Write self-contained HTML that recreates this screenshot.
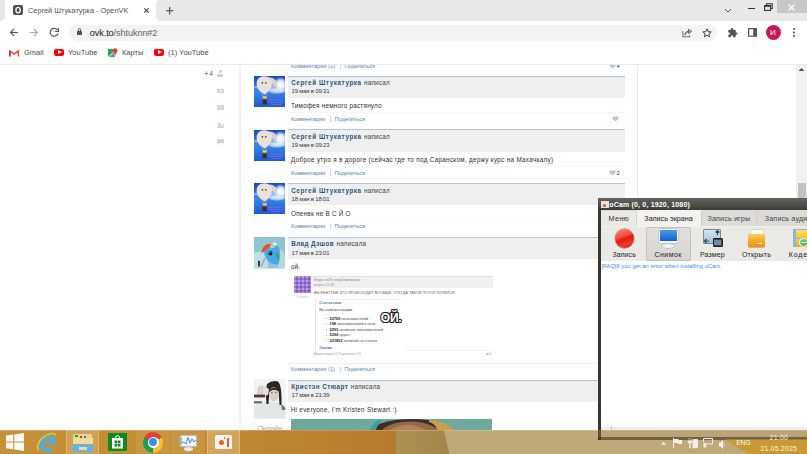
<!DOCTYPE html>
<html><head><meta charset="utf-8">
<style>
*{box-sizing:border-box;margin:0;padding:0}
html,body{width:807px;height:454px;overflow:hidden;background:#fff;font-family:"Liberation Sans",sans-serif;position:relative}
.a{position:absolute}
.t{position:absolute;white-space:nowrap;line-height:1.117}
svg{position:absolute;overflow:visible}
</style></head><body>
<div class="a" style="left:0;top:0;width:807px;height:454px;overflow:hidden">
<!-- CHROME TAB STRIP -->
<div class="a" style="left:0;top:0;width:162px;height:21px;background:#fff"></div>
<div class="a" style="left:0;top:0;width:5px;height:21px;background:#e8e8e8;border-radius:0 0 5px 0"></div>
<div class="a" style="left:156px;top:0;width:651px;height:21px;background:#e8e8e8;border-radius:4px 0 0 5px"></div>
<div class="a" style="left:12.6px;top:5.2px;width:10.2px;height:10.2px;background:#505050;border-radius:2px"></div>
<svg class="a" style="left:12.6px;top:5.2px" width="10.2" height="10.2"><ellipse cx="5.1" cy="5.1" rx="2.2" ry="2.7" stroke="#fff" stroke-width="1.3" fill="none"/></svg>
<div class="t" style="left:28px;top:6.8px;color:#505050;font-size:7.4px;letter-spacing:-0.02px">Сергей Штукатурка - OpenVK</div>
<svg class="a" style="left:143.8px;top:8.2px" width="5" height="5"><path d="M0.3 0.3 L4.7 4.7 M4.7 0.3 L0.3 4.7" stroke="#444" stroke-width="1.1"/></svg>
<svg class="a" style="left:166.4px;top:6.7px" width="7.4" height="7.4"><path d="M3.7 0 V7.4 M0 3.7 H7.4" stroke="#444" stroke-width="1.1"/></svg>
<!-- window controls -->
<div class="a" style="left:777px;top:0;width:30px;height:13px;background:#c7c7c7"></div>
<svg class="a" style="left:788px;top:3.5px" width="7" height="7"><path d="M0.5 0.5 L6.5 6.5 M6.5 0.5 L0.5 6.5" stroke="#fff" stroke-width="1.2"/></svg>
<div class="a" style="left:748px;top:8px;width:7px;height:1.2px;background:#333"></div>
<svg class="a" style="left:764px;top:3px" width="9" height="8"><path d="M2.5 2 V0.8 H8.2 V5.5 H7" stroke="#333" stroke-width="1.1" fill="none"/><rect x="0.6" y="2.6" width="6" height="4.8" stroke="#333" stroke-width="1.1" fill="none"/><rect x="0.6" y="2.6" width="6" height="1.2" fill="#333"/></svg>
<svg class="a" style="left:724px;top:8px" width="8" height="5"><path d="M1 1 L4 4 L7 1" stroke="#555" stroke-width="1" fill="none"/></svg>

<!-- TOOLBAR -->
<svg class="a" style="left:9px;top:28px" width="10" height="9"><path d="M9 4.5 H1.5 M5 1 L1.5 4.5 L5 8" stroke="#555" stroke-width="1.1" fill="none"/></svg>
<svg class="a" style="left:29px;top:28px" width="10" height="9"><path d="M1 4.5 H8.5 M5 1 L8.5 4.5 L5 8" stroke="#aaa" stroke-width="1.1" fill="none"/></svg>
<svg class="a" style="left:49px;top:27px" width="11" height="11"><path d="M8.6 3.2 A4 4 0 1 0 9 6.5" stroke="#555" stroke-width="1.2" fill="none"/><path d="M9.5 1 V4.5 H6" stroke="#555" stroke-width="1.1" fill="none"/></svg>
<div class="a" style="left:68.5px;top:24.5px;width:648.5px;height:16.7px;background:#f1f3f4;border-radius:8.35px"></div>
<div class="a" style="left:77px;top:30.5px;width:5px;height:4.5px;background:#555;border-radius:0.5px"></div>
<div class="a" style="left:78px;top:28px;width:3px;height:4px;border:1px solid #555;border-radius:2px 2px 0 0"></div>
<div class="t" style="left:89.8px;top:28.3px;color:#202124;font-size:9.2px;letter-spacing:-0.12px">ovk.to<span style="color:#5f6368">/shtuknn#2</span></div>
<!-- share/star -->
<svg class="a" style="left:0;top:0" width="807" height="45"><path d="M682.9 31 V36.8 H689.6 V35.2" stroke="#777" stroke-width="1.1" fill="none"/><path d="M684.9 35.2 Q685.2 31.5 689.6 31.4" stroke="#555" stroke-width="1.1" fill="none"/><path d="M688.6 29.2 L691.8 31.4 L688.6 33.6Z" stroke="#555" stroke-width=".9" fill="none" stroke-linejoin="round"/></svg>
<svg class="a" style="left:702px;top:28px" width="10" height="10"><path d="M5 0.8 L6.2 3.7 L9.2 3.9 L6.9 5.8 L7.6 8.8 L5 7.2 L2.4 8.8 L3.1 5.8 L0.8 3.9 L3.8 3.7 Z" stroke="#444" stroke-width="1" fill="none"/></svg>
<!-- extension puzzle -->
<svg class="a" style="left:728.2px;top:28px" width="9.6" height="9.6" viewBox="1.5 0.8 21.7 21.7"><path d="M20.5 11H19V7c0-1.1-.9-2-2-2h-4V3.5C13 2.12 11.88 1 10.5 1S8 2.12 8 3.5V5H4c-1.1 0-1.99.9-1.99 2v3.8H3.5c1.49 0 2.7 1.21 2.7 2.7s-1.21 2.7-2.7 2.7H2V20c0 1.1.9 2 2 2h3.8v-1.5c0-1.490 1.21-2.7 2.7-2.7 1.49 0 2.7 1.21 2.7 2.7V22H17c1.1 0 2-.9 2-2v-4h1.5c1.38 0 2.5-1.12 2.5-2.5S21.88 11 20.5 11z" fill="#555"/></svg>
<svg class="a" style="left:748.3px;top:28.2px" width="9" height="8.8"><rect x="0.6" y="0.6" width="7.8" height="7.6" stroke="#555" stroke-width="1.2" fill="none"/><rect x="5.2" y="0.6" width="3.2" height="7.6" fill="#555"/></svg>
<div class="a" style="left:766px;top:25px;width:15px;height:15px;border-radius:50%;background:#c8175a"></div>
<div class="t" style="left:770px;top:28.5px;color:#fff;font-size:8px">И</div>
<div class="a" style="left:792.5px;top:28px;width:2px;height:2px;background:#444;border-radius:1px;box-shadow:0 3.5px 0 #444,0 7px 0 #444"></div>

<!-- BOOKMARKS -->
<svg class="a" style="left:8.8px;top:49.7px" width="10.2" height="6.5"><path d="M0.8 6.5 V0.9 L5.1 4 L9.4 0.9 V6.5" stroke="#e0463a" stroke-width="1.5" fill="none"/><path d="M0.8 6.5 V2" stroke="#c5362a" stroke-width="1.5"/></svg>
<div class="t" style="left:24px;top:49px;color:#4a4a4a;font-size:7.5px">Gmail</div>
<div class="a" style="left:54px;top:48.5px;width:10px;height:7px;background:#f00;border-radius:2px"></div>
<svg class="a" style="left:57.5px;top:50px" width="4" height="4"><path d="M0 0 L4 2 L0 4Z" fill="#fff"/></svg>
<div class="t" style="left:68px;top:49px;color:#4a4a4a;font-size:7.5px">YouTube</div>
<svg class="a" style="left:107.8px;top:48px" width="10" height="9"><polygon points="0,1 5.3,1 5.3,3.9 0,8.9" fill="#1fa463"/><polygon points="0,8.9 5.3,3.9 6,5.2 1.5,8.9" fill="#f4d03f"/><polygon points="1.5,8.9 5.4,5.2 7.2,8.9" fill="#4285f4"/><circle cx="7.1" cy="2.6" r="2.4" fill="#ea4335"/><polygon points="4.9,3.6 9.3,3.6 7.1,7.4" fill="#ea4335"/><circle cx="7.1" cy="2.6" r=".8" fill="#b02a20"/></svg>

<div class="t" style="left:122px;top:49px;color:#4a4a4a;font-size:7.5px">Карты</div>
<div class="a" style="left:154px;top:48.5px;width:10px;height:7px;background:#f00;border-radius:2px"></div>
<svg class="a" style="left:157.5px;top:50px" width="4" height="4"><path d="M0 0 L4 2 L0 4Z" fill="#fff"/></svg>
<div class="t" style="left:168px;top:49px;color:#4a4a4a;font-size:7.5px">(1) YouTube</div>
<div class="a" style="left:0;top:64px;width:807px;height:1px;background:#e9e9e9"></div>


<div class="a" style="left:0;top:65px;width:807px;height:365px;overflow:hidden"><div class="a" style="left:0;top:-65px;width:807px;height:430px">
<div class="t" style="left:204.50px;top:69.72px;font-size:6.5px;color:#7d8e9e;font-weight:bold;letter-spacing:1.045px;">+4</div>
<div class="a" style="left:218.5px;top:70px;width:3px;height:3px;background:#c6ced6;border-radius:50%"></div>
<div class="a" style="left:217px;top:73.5px;width:6px;height:3.5px;background:#c6ced6;border-radius:2px 2px 0 0"></div>
<div class="a" style="left:217px;top:88.5px;width:6.5px;height:4.5px;background:#cdd4da;border-radius:1px"></div>
<div class="a" style="left:219px;top:89.5px;width:2.5px;height:2.5px;background:#eef1f4;border-radius:50%"></div>
<div class="a" style="left:217px;top:105px;width:6.5px;height:5px;background:#cdd4da;border-radius:0.5px"></div>
<svg style="left:217px;top:105px" width="7" height="5"><path d="M0.3 0.5 L3.25 3 L6.2 0.5 M0.3 4.6 L2.5 2.4 M6.2 4.6 L4 2.4" stroke="#eef1f4" stroke-width="0.7" fill="none"/></svg>
<div class="a" style="left:218px;top:123px;width:2.5px;height:2.5px;background:#cdd4da;border-radius:50%"></div>
<div class="a" style="left:217px;top:125.5px;width:4.5px;height:2.5px;background:#cdd4da;border-radius:1.5px 1.5px 0 0"></div>
<div class="a" style="left:221.5px;top:124px;width:2px;height:2px;background:#cdd4da;border-radius:50%"></div>
<div class="a" style="left:221px;top:126px;width:3px;height:2px;background:#cdd4da;border-radius:1px 1px 0 0"></div>
<div class="a" style="left:217px;top:138.5px;width:6.5px;height:4.5px;background:#cdd4da;border-radius:0.5px"></div>
<svg style="left:218px;top:142.5px" width="3" height="2"><path d="M0 0 L0 2 L2 0Z" fill="#cdd4da"/></svg>
<div class="a" style="left:239px;top:65px;width:2px;height:365px;background:#eef2f5;"></div>
<div class="a" style="left:233px;top:65px;width:1px;height:365px;background:#fafbfc;"></div>
<div class="a" style="left:637px;top:65px;width:1px;height:365px;background:#e4e8ee;"></div>
<div class="t" style="left:291.00px;top:62.83px;font-size:5.6px;color:#5b7fa6;letter-spacing:0.022px;">Комментарии (1)</div>
<div class="a" style="left:340px;top:63.10000000000001px;width:0.8px;height:5.5px;background:#c8d0d8;"></div>
<div class="t" style="left:344.50px;top:62.83px;font-size:5.6px;color:#5b7fa6;letter-spacing:-0.042px;">Поделиться</div>
<svg style="left:608.5px;top:62.6px" width="7" height="6"><path d="M3.5 5.6 L0.7 2.9 A1.6 1.6 0 0 1 3.5 1.0 A1.6 1.6 0 0 1 6.3 2.9 Z" fill="#b4c8de"/></svg>
<div class="t" style="left:616.40px;top:62.65px;font-size:5.8px;color:#333;">4</div>
<svg style="left:254px;top:76.0px" width="31" height="31" viewBox="0 0 31 31">
<defs><linearGradient id="sky76" x1="0" y1="0" x2="0" y2="1"><stop offset="0" stop-color="#1848c8"/><stop offset=".5" stop-color="#3a86e4"/><stop offset=".7" stop-color="#2f74de"/><stop offset="1" stop-color="#1a5ad4"/></linearGradient>
<filter id="bb76"><feGaussianBlur stdDeviation=".35"/></filter><radialGradient id="sun76"><stop offset="0" stop-color="#fff"/><stop offset=".5" stop-color="#fff" stop-opacity=".85"/><stop offset="1" stop-color="#fff" stop-opacity="0"/></radialGradient></defs>
<rect width="31" height="31" fill="url(#sky76)"/><g filter="url(#bb76)">
<circle cx="26.5" cy="8" r="7" fill="url(#sun76)"/>
<ellipse cx="23" cy="15" rx="8" ry="2.5" fill="#fff" opacity=".55"/>
<ellipse cx="4" cy="11" rx="4" ry="1.5" fill="#fff" opacity=".4"/>
<ellipse cx="24" cy="12" rx="9" ry="4" fill="#fff" opacity=".5"/>
<path d="M15 1.5 Q21.5 1.5 23 7 Q23.5 11.5 21.5 11.5 Q20 8 16 8Z" fill="#ddd2cf"/>
<path d="M10.3 0.3 Q17.8 0.3 17.9 8 Q17.8 14 10.5 18.6 Q2.6 14 2.6 8 Q2.7 0.3 10.3 0.3Z" fill="#eae0dc"/>
<circle cx="8.4" cy="6.8" r=".85" fill="#4a4040"/><circle cx="11.8" cy="6.8" r=".85" fill="#4a4040"/>
<path d="M8 17.5 L9 20.5 M12.5 17.5 L12 20.5" stroke="#ccc" stroke-width=".4"/>
<rect x="8.6" y="20.2" width="4.2" height="8" rx=".8" fill="#4a2a18"/>
<rect x="8.6" y="20.2" width="4.2" height="2.5" fill="#c8d8b0"/>
<rect x="8.6" y="23" width="4.2" height="1.2" fill="#a03020"/>
<path d="M14.5 24.2 H29 M14.5 26.5 H29 M17 28.6 H27" stroke="#a868f0" stroke-width=".8" opacity=".7"/>
</g></svg>
<div class="a" style="left:288px;top:75.5px;width:336.5px;height:22.5px;background:#efefef;border-top:1.5px solid #b3c5d8"></div>
<div class="t" style="left:291.20px;top:79.20px;font-size:6.3px;color:#2b5780;font-weight:bold;letter-spacing:0.585px;">Сергей Штукатурка</div>
<div class="t" style="left:364.00px;top:79.20px;font-size:6.3px;color:#404040;letter-spacing:0.237px;">написал</div>
<div class="t" style="left:291.50px;top:88.47px;font-size:6.0px;color:#3a3a3a;letter-spacing:-0.199px;">19 мая в 09:31</div>
<div class="t" style="left:291.00px;top:102.20px;font-size:6.3px;color:#2a2a2a;letter-spacing:0.249px;">Тимофея немного растянуло</div>
<div class="a" style="left:288px;top:112.0px;width:337px;height:1px;background:#f6f6f6;"></div>
<div class="t" style="left:291.00px;top:116.03px;font-size:5.6px;color:#5b7fa6;letter-spacing:-0.116px;">Комментарии</div>
<div class="a" style="left:330px;top:116.3px;width:0.8px;height:5.5px;background:#c8d0d8;"></div>
<div class="t" style="left:334.50px;top:116.03px;font-size:5.6px;color:#5b7fa6;letter-spacing:-0.042px;">Поделиться</div>
<svg style="left:611.5px;top:115.8px" width="7" height="6"><path d="M3.5 5.6 L0.7 2.9 A1.6 1.6 0 0 1 3.5 1.0 A1.6 1.6 0 0 1 6.3 2.9 Z" fill="#b4c8de"/></svg>
<svg style="left:254px;top:129.7px" width="31" height="31" viewBox="0 0 31 31">
<defs><linearGradient id="sky129" x1="0" y1="0" x2="0" y2="1"><stop offset="0" stop-color="#1848c8"/><stop offset=".5" stop-color="#3a86e4"/><stop offset=".7" stop-color="#2f74de"/><stop offset="1" stop-color="#1a5ad4"/></linearGradient>
<filter id="bb129"><feGaussianBlur stdDeviation=".35"/></filter><radialGradient id="sun129"><stop offset="0" stop-color="#fff"/><stop offset=".5" stop-color="#fff" stop-opacity=".85"/><stop offset="1" stop-color="#fff" stop-opacity="0"/></radialGradient></defs>
<rect width="31" height="31" fill="url(#sky129)"/><g filter="url(#bb129)">
<circle cx="26.5" cy="8" r="7" fill="url(#sun129)"/>
<ellipse cx="23" cy="15" rx="8" ry="2.5" fill="#fff" opacity=".55"/>
<ellipse cx="4" cy="11" rx="4" ry="1.5" fill="#fff" opacity=".4"/>
<ellipse cx="24" cy="12" rx="9" ry="4" fill="#fff" opacity=".5"/>
<path d="M15 1.5 Q21.5 1.5 23 7 Q23.5 11.5 21.5 11.5 Q20 8 16 8Z" fill="#ddd2cf"/>
<path d="M10.3 0.3 Q17.8 0.3 17.9 8 Q17.8 14 10.5 18.6 Q2.6 14 2.6 8 Q2.7 0.3 10.3 0.3Z" fill="#eae0dc"/>
<circle cx="8.4" cy="6.8" r=".85" fill="#4a4040"/><circle cx="11.8" cy="6.8" r=".85" fill="#4a4040"/>
<path d="M8 17.5 L9 20.5 M12.5 17.5 L12 20.5" stroke="#ccc" stroke-width=".4"/>
<rect x="8.6" y="20.2" width="4.2" height="8" rx=".8" fill="#4a2a18"/>
<rect x="8.6" y="20.2" width="4.2" height="2.5" fill="#c8d8b0"/>
<rect x="8.6" y="23" width="4.2" height="1.2" fill="#a03020"/>
<path d="M14.5 24.2 H29 M14.5 26.5 H29 M17 28.6 H27" stroke="#a868f0" stroke-width=".8" opacity=".7"/>
</g></svg>
<div class="a" style="left:288px;top:129.2px;width:336.5px;height:22.5px;background:#efefef;border-top:1.5px solid #b3c5d8"></div>
<div class="t" style="left:291.20px;top:132.90px;font-size:6.3px;color:#2b5780;font-weight:bold;letter-spacing:0.585px;">Сергей Штукатурка</div>
<div class="t" style="left:364.00px;top:132.90px;font-size:6.3px;color:#404040;letter-spacing:0.237px;">написал</div>
<div class="t" style="left:291.50px;top:142.17px;font-size:6.0px;color:#3a3a3a;letter-spacing:-0.199px;">19 мая в 09:23</div>
<div class="t" style="left:291.00px;top:155.90px;font-size:6.3px;color:#2a2a2a;letter-spacing:0.315px;">Доброе утро я в дороге (сейчас где то под Саранском, держу курс на Махачкалу)</div>
<div class="a" style="left:288px;top:165.7px;width:337px;height:1px;background:#f6f6f6;"></div>
<div class="t" style="left:291.00px;top:169.73px;font-size:5.6px;color:#5b7fa6;letter-spacing:-0.116px;">Комментарии</div>
<div class="a" style="left:330px;top:169.99999999999997px;width:0.8px;height:5.5px;background:#c8d0d8;"></div>
<div class="t" style="left:334.50px;top:169.73px;font-size:5.6px;color:#5b7fa6;letter-spacing:-0.042px;">Поделиться</div>
<svg style="left:608.5px;top:169.5px" width="7" height="6"><path d="M3.5 5.6 L0.7 2.9 A1.6 1.6 0 0 1 3.5 1.0 A1.6 1.6 0 0 1 6.3 2.9 Z" fill="#b4c8de"/></svg>
<div class="t" style="left:616.40px;top:169.55px;font-size:5.8px;color:#333;">2</div>
<svg style="left:254px;top:183.4px" width="31" height="31" viewBox="0 0 31 31">
<defs><linearGradient id="sky183" x1="0" y1="0" x2="0" y2="1"><stop offset="0" stop-color="#1848c8"/><stop offset=".5" stop-color="#3a86e4"/><stop offset=".7" stop-color="#2f74de"/><stop offset="1" stop-color="#1a5ad4"/></linearGradient>
<filter id="bb183"><feGaussianBlur stdDeviation=".35"/></filter><radialGradient id="sun183"><stop offset="0" stop-color="#fff"/><stop offset=".5" stop-color="#fff" stop-opacity=".85"/><stop offset="1" stop-color="#fff" stop-opacity="0"/></radialGradient></defs>
<rect width="31" height="31" fill="url(#sky183)"/><g filter="url(#bb183)">
<circle cx="26.5" cy="8" r="7" fill="url(#sun183)"/>
<ellipse cx="23" cy="15" rx="8" ry="2.5" fill="#fff" opacity=".55"/>
<ellipse cx="4" cy="11" rx="4" ry="1.5" fill="#fff" opacity=".4"/>
<ellipse cx="24" cy="12" rx="9" ry="4" fill="#fff" opacity=".5"/>
<path d="M15 1.5 Q21.5 1.5 23 7 Q23.5 11.5 21.5 11.5 Q20 8 16 8Z" fill="#ddd2cf"/>
<path d="M10.3 0.3 Q17.8 0.3 17.9 8 Q17.8 14 10.5 18.6 Q2.6 14 2.6 8 Q2.7 0.3 10.3 0.3Z" fill="#eae0dc"/>
<circle cx="8.4" cy="6.8" r=".85" fill="#4a4040"/><circle cx="11.8" cy="6.8" r=".85" fill="#4a4040"/>
<path d="M8 17.5 L9 20.5 M12.5 17.5 L12 20.5" stroke="#ccc" stroke-width=".4"/>
<rect x="8.6" y="20.2" width="4.2" height="8" rx=".8" fill="#4a2a18"/>
<rect x="8.6" y="20.2" width="4.2" height="2.5" fill="#c8d8b0"/>
<rect x="8.6" y="23" width="4.2" height="1.2" fill="#a03020"/>
<path d="M14.5 24.2 H29 M14.5 26.5 H29 M17 28.6 H27" stroke="#a868f0" stroke-width=".8" opacity=".7"/>
</g></svg>
<div class="a" style="left:288px;top:182.9px;width:336.5px;height:22.5px;background:#efefef;border-top:1.5px solid #b3c5d8"></div>
<div class="t" style="left:291.20px;top:186.60px;font-size:6.3px;color:#2b5780;font-weight:bold;letter-spacing:0.585px;">Сергей Штукатурка</div>
<div class="t" style="left:364.00px;top:186.60px;font-size:6.3px;color:#404040;letter-spacing:0.237px;">написал</div>
<div class="t" style="left:291.50px;top:195.87px;font-size:6.0px;color:#3a3a3a;letter-spacing:-0.199px;">18 мая в 18:01</div>
<div class="t" style="left:291.00px;top:209.60px;font-size:6.3px;color:#2a2a2a;letter-spacing:0.258px;">Опенвк не В С Й О</div>
<div class="a" style="left:288px;top:219.4px;width:337px;height:1px;background:#f6f6f6;"></div>
<div class="t" style="left:291.00px;top:223.43px;font-size:5.6px;color:#5b7fa6;letter-spacing:-0.116px;">Комментарии</div>
<div class="a" style="left:330px;top:223.7px;width:0.8px;height:5.5px;background:#c8d0d8;"></div>
<div class="t" style="left:334.50px;top:223.43px;font-size:5.6px;color:#5b7fa6;letter-spacing:-0.042px;">Поделиться</div>
<svg style="left:611.5px;top:223.2px" width="7" height="6"><path d="M3.5 5.6 L0.7 2.9 A1.6 1.6 0 0 1 3.5 1.0 A1.6 1.6 0 0 1 6.3 2.9 Z" fill="#b4c8de"/></svg>
<svg style="left:254px;top:236.6px" width="31" height="31.4" viewBox="0 0 31 31.4">
<defs><filter id="bl1"><feGaussianBlur stdDeviation=".55"/></filter></defs>
<rect width="31" height="31.4" fill="#90c6d2"/>
<g filter="url(#bl1)">
<path d="M0 16 Q8 12 14 18 L14 31.4 H0Z" fill="#bddfe6"/>
<path d="M25 12 Q31 14 31 20 V31.4 H24Z" fill="#b2d9e2"/>
<path d="M10 10 Q17 6.5 24 9 Q26.5 12 25.8 20 Q25.5 26 24 27.3 Q18 28 15 25 Q12 22 10.5 18 Z" fill="#4aa6e8"/>
<path d="M21.5 15 Q25 16 25 21 L24 23 Q22 20 21.5 15Z" fill="#36a458"/>
<path d="M7.5 16.4 Q8 9 13 7.2 Q17 6.5 18 8 Q14 10 12 13 Z" fill="#f04a26"/>
<path d="M16.4 7.7 Q20 7.5 20.8 11 Q18.5 10 16.4 12Z" fill="#f8c850"/>
<path d="M18.6 5.5 Q22.5 5 23 8.4 L19.5 8.6Z" fill="#eef6f8"/>
<ellipse cx="16.4" cy="16.4" rx="2" ry="2.1" fill="#1e1830"/>
<circle cx="15.8" cy="15.8" r=".55" fill="#fff"/>
<path d="M11 21 L7.2 29.5" stroke="#a4acb2" stroke-width="1.7"/>
<rect x="4" y="23.8" width="2" height="5.7" fill="#3a3a3a"/>
</g>
</svg>
<div class="a" style="left:288px;top:236.6px;width:336.5px;height:22.5px;background:#efefef;border-top:1.5px solid #b3c5d8"></div>
<div class="t" style="left:291.20px;top:240.30px;font-size:6.3px;color:#2b5780;font-weight:bold;letter-spacing:0.416px;">Влад Дэшов</div>
<div class="t" style="left:336.40px;top:240.30px;font-size:6.3px;color:#404040;letter-spacing:0.282px;">написала</div>
<div class="t" style="left:291.50px;top:249.57px;font-size:6.0px;color:#3a3a3a;letter-spacing:-0.199px;">17 мая в 23:01</div>
<div class="t" style="left:291.00px;top:263.30px;font-size:6.3px;color:#2a2a2a;letter-spacing:0.242px;">ой.</div>
<div class="a" style="left:405px;top:350.3px;width:88px;height:0.8px;background:#f2f2f2;"></div>
<svg style="left:294px;top:276px" width="17" height="17"><defs><pattern id="pp" width="4" height="4" patternUnits="userSpaceOnUse"><rect width="4" height="4" fill="#9a7ad0"/><circle cx="1" cy="1" r="1" fill="#d0a8f0"/><circle cx="3" cy="3" r=".9" fill="#6a50b0"/></pattern></defs><rect width="17" height="17" fill="url(#pp)"/></svg>
<div class="a" style="left:311px;top:276.3px;width:182px;height:12px;background:#f0f0f0;border-top:1px solid #d8e0e8"></div>
<div class="t" style="left:313.80px;top:277.94px;font-size:3.6px;color:#6a7f9a;letter-spacing:0.189px;">Федя ебЛя опубликовала</div>
<div class="t" style="left:314.00px;top:283.59px;font-size:3.0px;color:#888;letter-spacing:0.093px;">вчера в 21:03</div>
<div class="t" style="left:313.80px;top:292.33px;font-size:3.5px;color:#555;letter-spacing:0.135px;">ВЫ ЕБНУТЫЕ ЧТО ПРОИСХОДИТ ВООБЩЕ, ОТКУДА ТАКОЙ ПОТОК ПОПИЛСЯ</div>
<div class="t" style="left:296.00px;top:296.29px;font-size:3.0px;color:#bbb;letter-spacing:0.343px;">Онлайн</div>
<div class="a" style="left:315.4px;top:299.3px;width:90px;height:58px;background:#fff;border-left:1px solid #e6e6e6;border-top:1px solid #f2f2f2"></div>
<div class="t" style="left:319.30px;top:300.84px;font-size:3.6px;color:#4a6a8a;font-weight:bold;letter-spacing:0.208px;">Статистика</div>
<div class="t" style="left:319.30px;top:308.05px;font-size:3.7px;color:#333;letter-spacing:0.019px;">На этой инстанции:</div>
<div class="a" style="left:326.2px;top:318.0px;width:1.2px;height:1.2px;background:#888;border-radius:50%"></div>
<div class="t" style="left:329.6px;top:316.56px;font-size:3.8px;color:#444;letter-spacing:0.044px"><b style="color:#111">22765</b> пользователей</div>
<div class="a" style="left:326.2px;top:323.5px;width:1.2px;height:1.2px;background:#888;border-radius:50%"></div>
<div class="t" style="left:329.6px;top:322.06px;font-size:3.8px;color:#444;letter-spacing:0.003px"><b style="color:#111">198</b> пользователей в сети</div>
<div class="a" style="left:326.2px;top:329.0px;width:1.2px;height:1.2px;background:#888;border-radius:50%"></div>
<div class="t" style="left:329.6px;top:327.56px;font-size:3.8px;color:#444;letter-spacing:0.010px"><b style="color:#111">2293</b> активных пользователей</div>
<div class="a" style="left:326.2px;top:334.5px;width:1.2px;height:1.2px;background:#888;border-radius:50%"></div>
<div class="t" style="left:329.6px;top:333.06px;font-size:3.8px;color:#444;letter-spacing:0.102px"><b style="color:#111">5396</b> групп</div>
<div class="a" style="left:326.2px;top:340.0px;width:1.2px;height:1.2px;background:#888;border-radius:50%"></div>
<div class="t" style="left:329.6px;top:338.56px;font-size:3.8px;color:#444;letter-spacing:0.064px"><b style="color:#111">221893</b> записей на стенах</div>
<div class="t" style="left:319.30px;top:346.24px;font-size:3.6px;color:#5a7a9a;font-weight:bold;letter-spacing:-0.238px;">Ссылки</div>
<div class="t" style="left:380.80px;top:312.34px;font-size:12px;color:#fff;font-weight:bold;letter-spacing:-0.231px;text-shadow:-1px 0 0 #222,1px 0 0 #222,0 -1px 0 #222,0 1px 0 #222,-.8px -.8px 0 #222,.8px .8px 0 #222,-.8px .8px 0 #222,.8px -.8px 0 #222;">ОЙ.</div>
<div class="t" style="left:313.40px;top:352.79px;font-size:3.0px;color:#8aa0b8;letter-spacing:0.082px;">Комментарии (2)   Поделиться (3)</div>
<div class="a" style="left:485.5px;top:352.8px;width:3px;height:2.6px;background:#b8c8dc;border-radius:50% 50% 50% 50%/60% 60% 40% 40%"></div>
<div class="t" style="left:489.50px;top:352.79px;font-size:3.0px;color:#8a9aa8;">6</div>
<div class="a" style="left:288px;top:362.5px;width:337px;height:1px;background:#f0f0f0;"></div>
<div class="t" style="left:291.00px;top:366.23px;font-size:5.6px;color:#5b7fa6;letter-spacing:0.022px;">Комментарии (1)</div>
<div class="a" style="left:340px;top:366.5px;width:0.8px;height:5.5px;background:#c8d0d8;"></div>
<div class="t" style="left:344.50px;top:366.23px;font-size:5.6px;color:#5b7fa6;letter-spacing:-0.042px;">Поделиться</div>
<svg style="left:254px;top:379.4px" width="31.5" height="39.4" viewBox="0 0 31.5 39.4">
<defs><filter id="bl2"><feGaussianBlur stdDeviation=".5"/></filter></defs>
<rect width="31.5" height="39.4" fill="#f2f2f2"/>
<g filter="url(#bl2)">
<path d="M0 39.4 L0 27 Q8 22 18 23 Q27 23 31.5 28 L31.5 39.4Z" fill="#e2e6e6"/>
<path d="M12.5 25 Q11 12 13 5 Q18 1 24 2.5 Q28 6 27.5 26 L25.5 26 L24.5 12 Q20 9 15.5 12 L14.5 25Z" fill="#2e2828"/>
<ellipse cx="19.8" cy="15.2" rx="4.8" ry="7" fill="#d9cdc7"/>
<path d="M15 11.5 Q19 6.5 25 10.5 L24.8 12.5 Q20 9 15.3 13Z" fill="#2e2828"/>
<path d="M17 13.6 H18.8 M21 13.6 H22.8" stroke="#555" stroke-width=".7"/>
<path d="M2.5 16 Q2.5 9 6 6.5 Q11 6 15 10.5 L14 16 Q9 17.5 2.5 16Z" fill="#e6dedb"/>
<path d="M5 7 V15 M8 6.5 V15" stroke="#9a8a86" stroke-width=".5"/>
<rect x="0" y="15.6" width="11" height="2.8" fill="#5e3028"/>
<rect x="0" y="22.3" width="7.8" height="2" fill="#52605e"/>
<path d="M27 25.5 Q31.5 27 31.5 31 L28 31Z" fill="#6e7676"/>
</g>
</svg>
<div class="t" style="left:257.30px;top:424.68px;font-size:7.2px;color:#a4a8ac;letter-spacing:-0.180px;">Онлайн</div>
<div class="a" style="left:288px;top:379.5px;width:336.5px;height:22.5px;background:#efefef;border-top:1.5px solid #b3c5d8"></div>
<div class="t" style="left:291.20px;top:383.20px;font-size:6.3px;color:#2b5780;font-weight:bold;letter-spacing:0.474px;">Кристэн Стюарт</div>
<div class="t" style="left:350.70px;top:383.20px;font-size:6.3px;color:#404040;letter-spacing:0.232px;">написала</div>
<div class="t" style="left:291.50px;top:392.47px;font-size:6.0px;color:#3a3a3a;letter-spacing:-0.199px;">17 мая в 21:39</div>
<div class="t" style="left:290.70px;top:406.20px;font-size:6.3px;color:#2a2a2a;letter-spacing:0.312px;">Hi everyone, I'm Kristen Stewart :)</div>
<svg style="left:291px;top:419.2px" width="201" height="11" viewBox="0 0 201 11">
<defs><filter id="bl3"><feGaussianBlur stdDeviation=".7"/></filter></defs>
<rect width="201" height="11" fill="#6fa99b"/>
<g filter="url(#bl3)">
<ellipse cx="121" cy="14" rx="42" ry="14" fill="#3a2e26"/>
<path d="M79 11 Q82 4 88 1 L91 2 Q86 6 85 11Z" fill="#3f98ac"/>
<path d="M138 1 Q156 2 163 11 L146 11 Q145 5 138 3Z" fill="#c9a04a"/>
<ellipse cx="119" cy="16" rx="30" ry="13.5" fill="#94694a"/>
<ellipse cx="117" cy="17.5" rx="21" ry="11.5" fill="#b08260"/>
</g>
</svg>
</div></div>
<div class="a" style="left:796px;top:65px;width:11px;height:365px;background:#f1f1f1"></div>
<svg style="left:798px;top:67px" width="7" height="5"><path d="M0.5 4 L3.5 1 L6.5 4Z" fill="#505050"/></svg>
<div class="a" style="left:797.5px;top:183px;width:8px;height:20px;background:#c1c1c1"></div>
<div class="a" style="left:597.6px;top:198px;width:209.4px;height:241.5px;background:#37362f;"></div>
<div class="a" style="left:597.6px;top:198px;width:209.4px;height:11.6px;background:linear-gradient(180deg,#62635d 0,#575852 30%,#4a4b45 65%,#3a3a35 100%);"></div>
<div class="a" style="left:601px;top:210px;width:206px;height:16px;background:#dcdad6;"></div>
<div class="a" style="left:601px;top:226px;width:206px;height:35px;background:#ebe9e5;"></div>
<div class="a" style="left:601px;top:261px;width:206px;height:166px;background:#fff;"></div>
<div class="a" style="left:601px;top:426.5px;width:206px;height:3.5px;background:#efedef;"></div>
<div class="a" style="left:601px;top:201px;width:8px;height:7px;background:#e8e2d8;"></div>
<div class="a" style="left:603px;top:203.5px;width:3px;height:3px;background:#e05020;border-radius:50%"></div>
<div class="t" style="left:609.20px;top:201.26px;font-size:7.0px;color:#fff;font-weight:bold;letter-spacing:0.180px;">oCam (0, 0, 1920, 1080)</div>
<div class="a" style="left:601px;top:211px;width:36.4px;height:15px;background:#ebe9e5;border-right:1px solid #d6d4d0"></div>
<div class="t" style="left:608.60px;top:214.68px;font-size:7.2px;color:#333;letter-spacing:0.235px;">Меню</div>
<div class="a" style="left:637px;top:210px;width:64px;height:16px;background:#f3f2ef;"></div>
<div class="t" style="left:644.30px;top:214.68px;font-size:7.2px;color:#222;letter-spacing:0.012px;">Запись экрана</div>
<div class="a" style="left:701px;top:211px;width:56px;height:15px;background:#dedcd8;border-right:1px solid #cfcdc9;border-left:1px solid #cfcdc9"></div>
<div class="t" style="left:707.50px;top:214.68px;font-size:7.2px;color:#444;letter-spacing:0.122px;">Запись игры</div>
<div class="t" style="left:764.70px;top:214.68px;font-size:7.2px;color:#444;letter-spacing:0.155px;">Запись аудио</div>
<div class="a" style="left:601px;top:226px;width:206px;height:1px;background:#f3f2ef;"></div>
<div class="a" style="left:614.8px;top:228.8px;width:19px;height:19px;border-radius:50%;background:linear-gradient(160deg,#ff8a78 0,#f44a3a 40%,#e01a10 52%,#f03a28 75%,#c80c08 100%);box-shadow:0 0 0 .4px #c05050"></div>
<div class="t" style="left:612.40px;top:250.66px;font-size:7.0px;color:#222;letter-spacing:0.089px;">Запись</div>
<div class="a" style="left:646px;top:227px;width:45px;height:34px;background:linear-gradient(180deg,#e2e0dc,#d8d6d2);border:1px solid #c4c2be;border-radius:2px"></div>
<div class="a" style="left:658.5px;top:228.8px;width:19.5px;height:14px;background:#f4f6f8;border-radius:1.5px;box-shadow:0 0 0 .5px #b0b4b8"></div>
<div class="a" style="left:660px;top:230px;width:16.5px;height:11.3px;background:linear-gradient(180deg,#4a9ae8,#1a5ed0);"></div>
<div class="a" style="left:665.5px;top:242.6px;width:5.5px;height:2.2px;background:#e0e2e4;"></div>
<div class="a" style="left:661.5px;top:244.2px;width:12.5px;height:3.6px;background:#eef0f2;border-radius:50%;box-shadow:0 0 0 .5px #a8acb0"></div>
<div class="t" style="left:654.50px;top:250.66px;font-size:7.0px;color:#222;letter-spacing:0.450px;">Снимок</div>
<div class="a" style="left:703.2px;top:229.4px;width:17.6px;height:15px;background:linear-gradient(180deg,#d8e4ee,#a8bccc);border:1px solid #7a8a9a;border-radius:1px"></div>
<svg style="left:703px;top:229px" width="20" height="19"><path d="M14.5 1.5 V6 M12.5 3.5 L14.5 1.5 L16.5 3.5" stroke="#2a4a6a" stroke-width="1.2" fill="none"/><path d="M1.5 12 H6 M3.5 10 L1.5 12 L3.5 14" stroke="#2a4a6a" stroke-width="1.2" fill="none"/></svg>
<div class="a" style="left:712.9px;top:238.2px;width:9.7px;height:8.8px;background:#3a4650;border:1px solid #1a2228;border-radius:1px"></div>
<div class="a" style="left:714.4px;top:239.7px;width:6.7px;height:5px;background:#6a8aa8;"></div>
<div class="t" style="left:699.90px;top:250.66px;font-size:7.0px;color:#222;letter-spacing:0.157px;">Размер</div>
<div class="a" style="left:749.5px;top:229.4px;width:14.5px;height:6px;background:#fbfaf6;border:0.5px solid #d8d4c8;border-radius:1px"></div>
<div class="a" style="left:748.1px;top:233.5px;width:17.3px;height:13.5px;background:linear-gradient(180deg,#ffcc55,#f6a42a 60%,#ec9018);border-radius:1.5px;box-shadow:0 0.5px 0 #c87810"></div>
<div class="a" style="left:757px;top:242.6px;width:5px;height:1px;background:#fff6e0;"></div>
<div class="t" style="left:741.90px;top:250.66px;font-size:7.0px;color:#222;letter-spacing:0.244px;">Открыть</div>
<div class="a" style="left:793.1px;top:228.8px;width:14px;height:18.7px;background:#8ab8d8;"></div>
<div class="a" style="left:795.5px;top:229.8px;width:11.5px;height:7.8px;background:linear-gradient(180deg,#ffe070,#f8c030);"></div>
<div class="a" style="left:795.5px;top:238.6px;width:11.5px;height:8px;background:linear-gradient(180deg,#f8d050,#e8a818);"></div>
<div class="a" style="left:799px;top:238px;width:9px;height:9px;border-radius:50%;background:radial-gradient(circle at 40% 35%,#70d870,#20a030);border:1px solid #fff"></div>
<div class="a" style="left:800.5px;top:242px;width:6px;height:1.2px;background:#fff;"></div>
<div class="t" style="left:788.80px;top:250.66px;font-size:7.0px;color:#222;letter-spacing:0.829px;">Кодек</div>
<div class="t" style="left:601.40px;top:263.05px;font-size:5.8px;color:#3f86d6;letter-spacing:0.037px;">[FAQ]If you get an error when installing oCam</div>
<div class="a" style="left:611px;top:426px;width:0.8px;height:10px;background:#c8c8c8;"></div>
<svg style="left:0;top:430px" width="807" height="24" viewBox="0 430 807 24"><defs>
<linearGradient id="tbo" x1="0" y1="0" x2="1" y2="0"><stop offset="0" stop-color="#c6903a"/><stop offset=".55" stop-color="#c08a32"/><stop offset="1" stop-color="#b7792e"/></linearGradient>
<linearGradient id="tbm" x1="0" y1="0" x2="1" y2="0"><stop offset="0" stop-color="#ad9152"/><stop offset="1" stop-color="#a2854a"/></linearGradient></defs>
<rect x="0" y="430" width="397" height="24" fill="url(#tbo)"/>
<rect x="396" y="430" width="411" height="24" fill="#bfa97b"/>
<polygon points="396,430 443.8,430 449.4,454 396,454" fill="url(#tbm)"/>
</svg>
<div class="a" style="left:0px;top:430px;width:807px;height:1px;background:rgba(255,230,170,.25);"></div>
<div class="a" style="left:601px;top:430px;width:206px;height:7.5px;background:rgba(60,50,30,.03);"></div>
<div class="a" style="left:597.8px;top:430px;width:3px;height:9.6px;background:rgba(30,25,15,.6);"></div>
<div class="a" style="left:597.8px;top:437.4px;width:209.2px;height:2.2px;background:rgba(50,40,20,.55);"></div>
<svg style="left:0;top:0" width="807" height="454"><polygon points="725,439.6 807,439.6 807,454 748,454" fill="#c89a34"/></svg>
<div class="a" style="left:66px;top:430px;width:33px;height:24px;background:rgba(255,235,190,.22);border-left:1px solid rgba(255,250,230,.2);border-right:1px solid rgba(255,250,230,.2)"></div>
<div class="a" style="left:136px;top:430px;width:34px;height:24px;background:rgba(255,235,190,.10);"></div>
<div class="a" style="left:171px;top:430px;width:34px;height:24px;background:rgba(255,235,190,.10);"></div>
<div class="a" style="left:207px;top:430px;width:33px;height:24px;background:rgba(255,240,200,.28);border-left:1px solid rgba(255,250,230,.25);border-right:1px solid rgba(255,250,230,.25)"></div>
<svg style="left:6px;top:433px" width="18" height="18"><path d="M0 2.6 L7.3 1.6 V8.4 H0Z M8.3 1.4 L18 0 V8.4 H8.3Z M0 9.4 H7.3 V16.3 L0 15.3Z M8.3 9.4 H18 V17.9 L8.3 16.5Z" fill="#fff" opacity=".95"/></svg>
<svg style="left:35px;top:432px" width="25" height="22" viewBox="0 0 25 22"><path d="M16.81 16.33 A6.7 6.7 0 1 1 19.13 12.13" stroke="#3cb2f0" stroke-width="3.6" fill="none"/><path d="M7.5 10.6 H19.3" stroke="#3cb2f0" stroke-width="2.2"/><g transform="rotate(-42 12.5 11)"><path d="M0.8 11 A11.7 7.2 0 0 1 24.2 11" stroke="#f4c21a" stroke-width="1.5" fill="none"/></g></svg>
<div class="a" style="left:73px;top:434px;width:19px;height:4px;background:#e8d49a;border-radius:1px 1px 0 0"></div>
<div class="a" style="left:75px;top:435px;width:3px;height:1.5px;background:#3a9a3a;"></div>
<div class="a" style="left:80px;top:436px;width:2px;height:1.5px;background:#d03030;"></div>
<div class="a" style="left:84px;top:436px;width:2px;height:1.5px;background:#3070d0;"></div>
<div class="a" style="left:73px;top:437.5px;width:19.5px;height:7px;background:#f4dd8e;"></div>
<div class="a" style="left:73px;top:444px;width:19.5px;height:7.5px;background:#62b2e2;border-radius:0 0 1px 1px"></div>
<div class="a" style="left:78.5px;top:446.5px;width:8.5px;height:3px;background:#f4dd8e;"></div>
<div class="a" style="left:108px;top:432.5px;width:19.3px;height:18.5px;background:#0b8c1e;"></div>
<svg style="left:111px;top:435px" width="13" height="14"><path d="M4.5 3 Q4.5 0.6 6.5 0.6 Q8.5 0.6 8.5 3" stroke="#fff" stroke-width="1" fill="none"/><rect x="1" y="3" width="11" height="10.5" fill="#fff"/><rect x="3.5" y="5.5" width="2.7" height="2.7" fill="#0b8c1e"/><rect x="6.8" y="5.5" width="2.7" height="2.7" fill="#0b8c1e"/><rect x="3.5" y="8.8" width="2.7" height="2.7" fill="#0b8c1e"/><rect x="6.8" y="8.8" width="2.7" height="2.7" fill="#0b8c1e"/></svg>
<div class="a" style="left:142.8px;top:432px;width:20.5px;height:20.5px;border-radius:50%;background:conic-gradient(from -60deg,#dd4433 0 120deg,#f6c026 120deg 240deg,#16a055 240deg 360deg)"></div>
<div class="a" style="left:147.6px;top:436.8px;width:11px;height:11px;border-radius:50%;background:#fff"></div>
<div class="a" style="left:149.1px;top:438.3px;width:8px;height:8px;border-radius:50%;background:#4688f0"></div>
<div class="a" style="left:180px;top:435px;width:17px;height:12px;background:#eef4f8;border:1px solid #b8c0c8;border-radius:1px"></div>
<svg style="left:181px;top:436px" width="15" height="10"><path d="M0 7 L3 6 L5 8 L7 1.5 L9 7 L11 3 L13 6 L15 4" stroke="#2a86d8" stroke-width=".9" fill="none"/></svg>
<div class="a" style="left:184px;top:447px;width:9px;height:3.5px;background:#e8ecef;border-radius:50%"></div>
<div class="a" style="left:178.5px;top:437px;width:3px;height:8px;background:#a8b0a8;border-radius:1px"></div>
<div class="a" style="left:214.8px;top:435px;width:17px;height:14.2px;background:#f8f4f0;border-radius:1.5px"></div>
<div class="a" style="left:219px;top:440px;width:5px;height:5px;background:#e8622a;border-radius:50%"></div>
<div class="a" style="left:227px;top:437.5px;width:2.2px;height:9.5px;background:#e8622a;"></div>
<div class="a" style="left:223.5px;top:437px;width:1.8px;height:1.8px;background:#e8622a;border-radius:50%"></div>
<svg style="left:660.5px;top:441.5px" width="5" height="3"><path d="M0 2.5 L2.5 0 L5 2.5Z" fill="#fff"/></svg>
<div class="a" style="left:672.6px;top:438.3px;width:1px;height:9.5px;background:#f6f2ea;"></div>
<svg style="left:673.5px;top:438.5px" width="8" height="5.5"><path d="M0 0 H4 L5 1 H8 V5 H4 L3 4 H0Z" fill="#f6f2ea"/></svg>
<svg style="left:688px;top:438px" width="10" height="10"><path d="M1 0 V3 M3 0 V3 M0 3 H4 V5 H2.5 V10 H1.5 V5 H0Z" fill="#f0ece4" stroke="#f0ece4" stroke-width=".5"/><rect x="5" y="1.5" width="4.5" height="8.3" fill="rgba(255,255,255,.8)" stroke="#f4f0e8" stroke-width=".8"/></svg>
<svg style="left:702.7px;top:438px" width="10" height="10"><path d="M0.5 0.5 H9.5 V6 H4 M0.5 0.5 V4" stroke="#f0ece4" stroke-width="1" fill="none"/><rect x="0.5" y="5" width="3" height="4.5" fill="#f0ece4"/></svg>
<svg style="left:719px;top:440px" width="6" height="9"><path d="M0 2.5 H1.5 L4 0 V9 L1.5 6.5 H0Z" fill="#f4f0e8"/><path d="M4.8 2.8 Q6 4.5 4.8 6.2" stroke="#f4f0e8" stroke-width=".7" fill="none"/></svg>
<div class="t" style="left:736.20px;top:439.27px;font-size:7.0px;color:#fbf4e4;letter-spacing:-0.390px;">ENG</div>
<div class="t" style="left:769.60px;top:433.97px;font-size:7.0px;color:#fbf4e4;letter-spacing:0.197px;">21:00</div>
<div class="t" style="left:760.40px;top:445.17px;font-size:7.0px;color:#fbf4e4;letter-spacing:0.167px;">21.05.2025</div>
</div></body></html>
